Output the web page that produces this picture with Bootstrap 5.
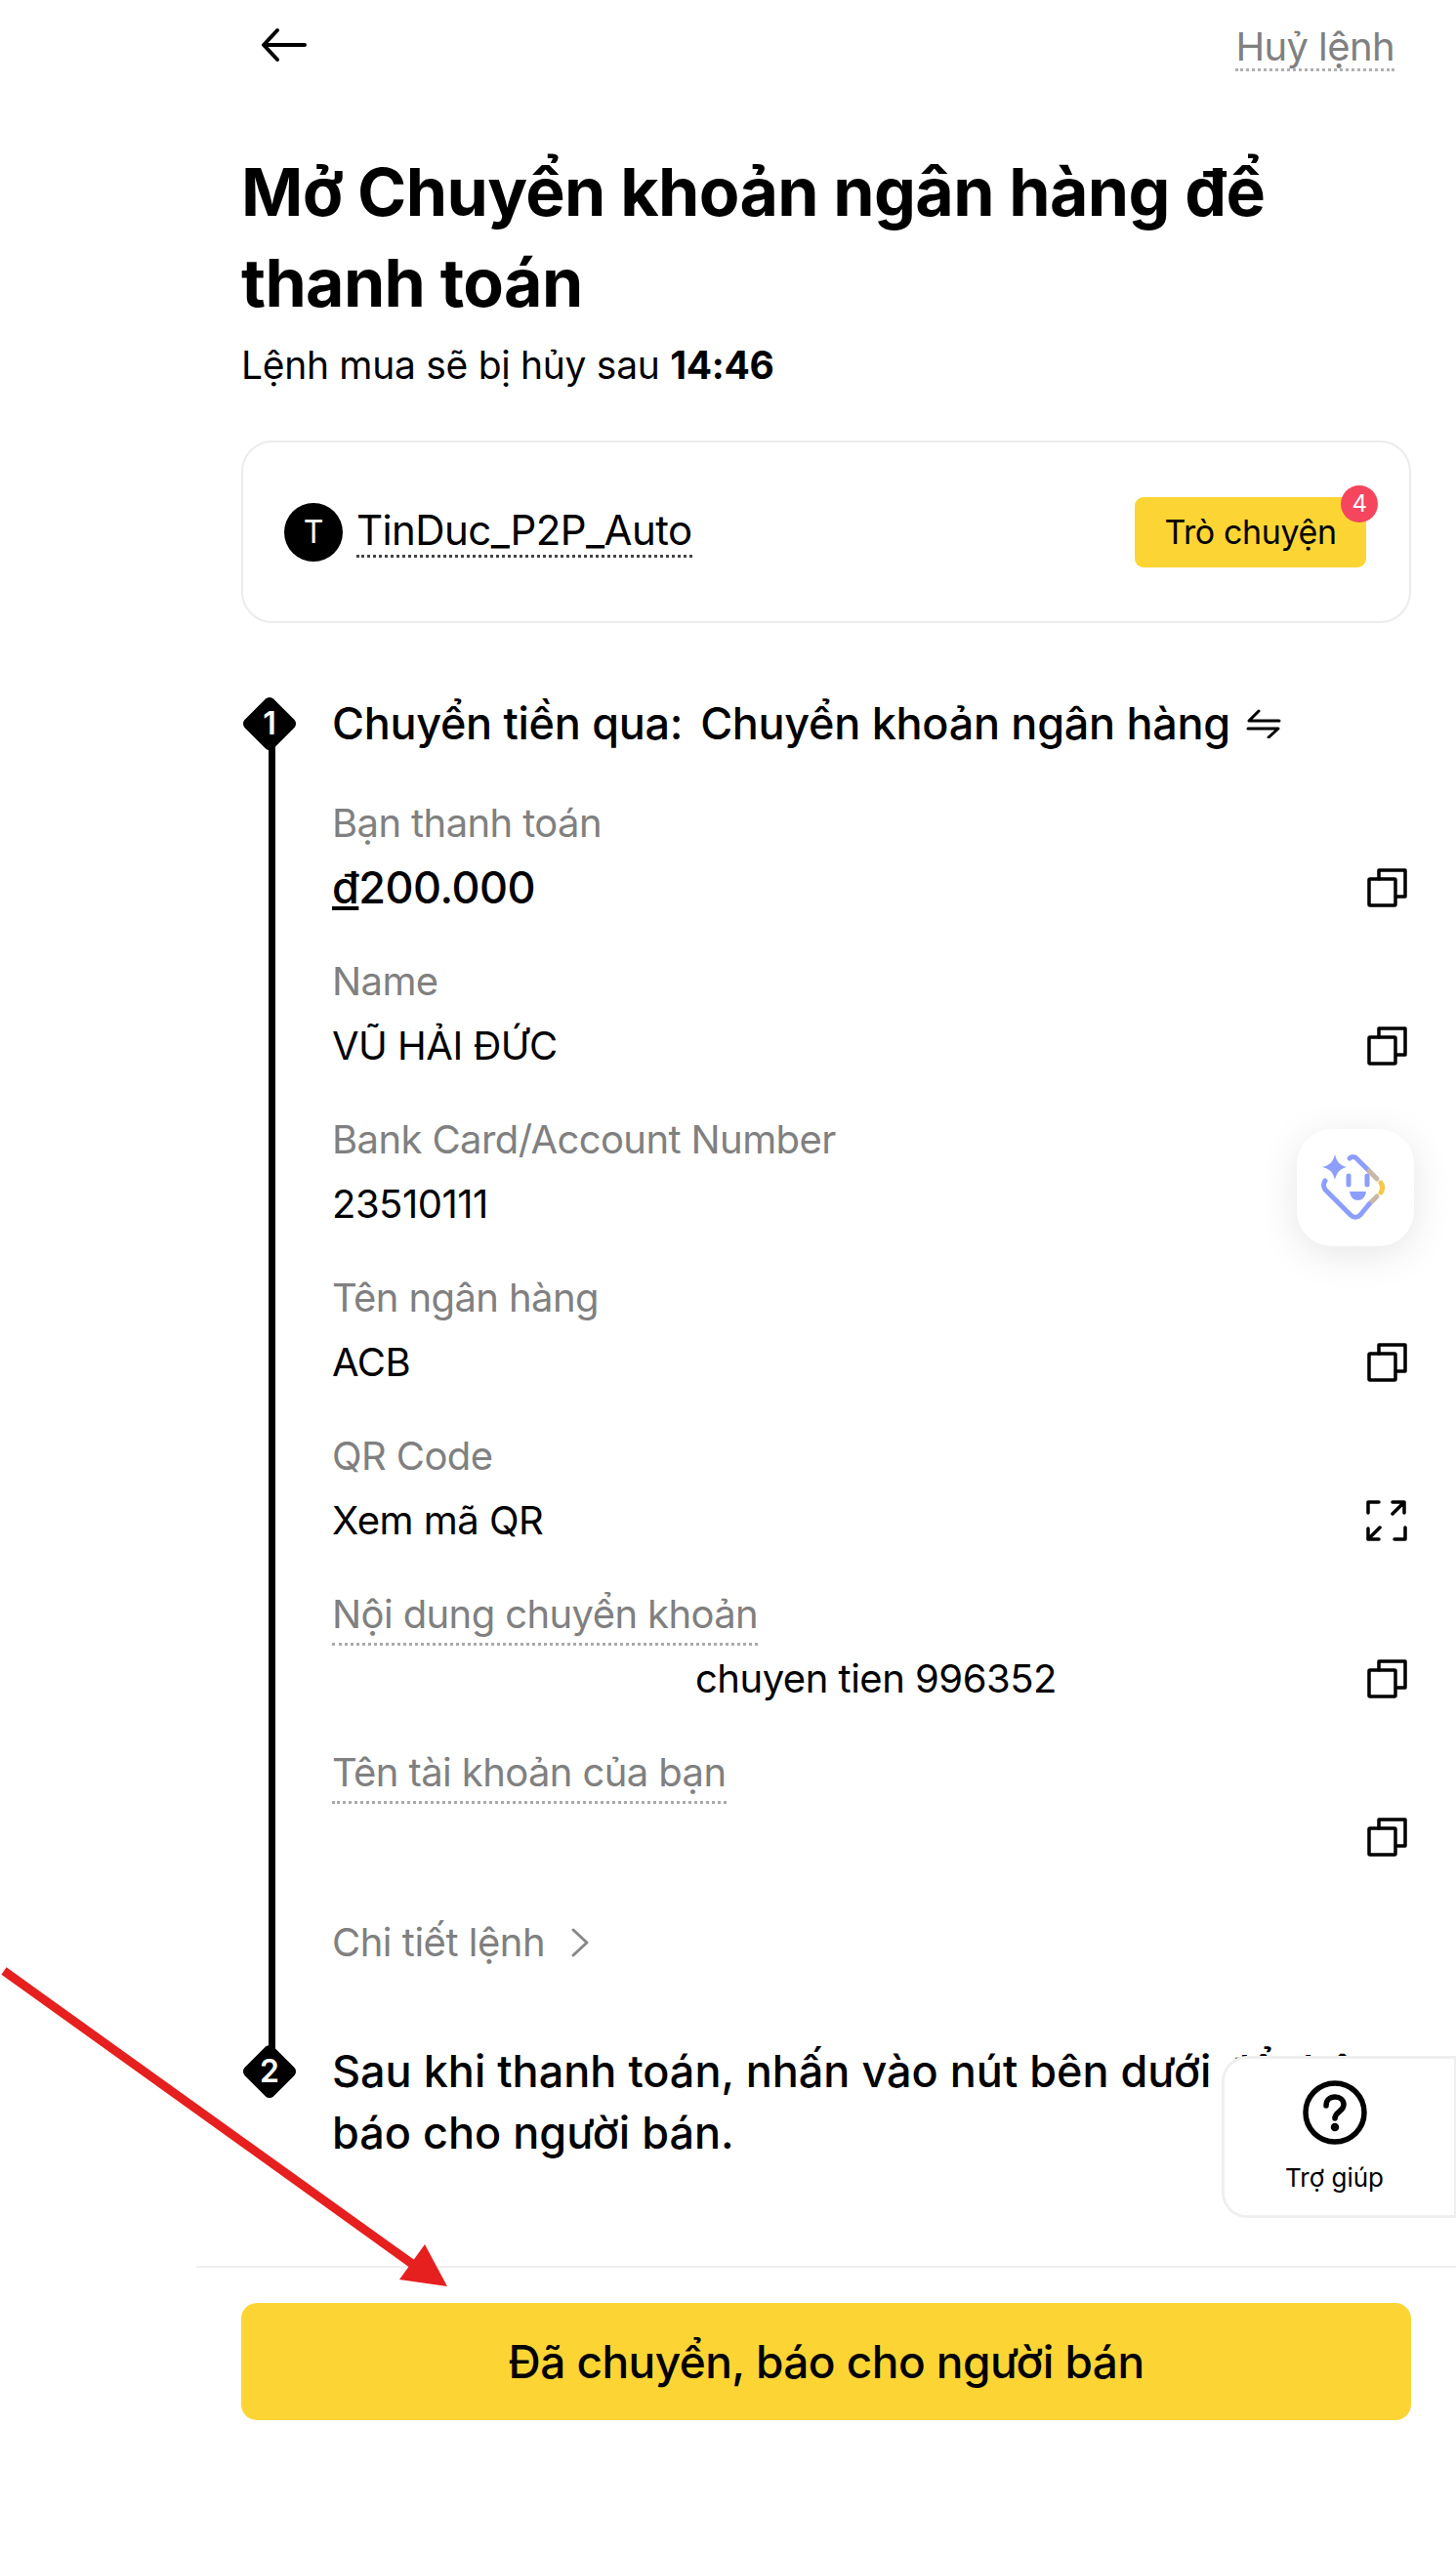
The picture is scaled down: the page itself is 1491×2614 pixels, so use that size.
<!doctype html>
<html lang="vi">
<head>
<title>Chuyển khoản ngân hàng</title>
<meta charset="utf-8">
<meta name="viewport" content="width=device-width, initial-scale=1">
<link href="https://cdn.jsdelivr.net/npm/bootstrap@5.3.3/dist/css/bootstrap.min.css" rel="stylesheet">
<style>
  body { font-family: Inter, "Noto Sans", sans-serif; color: #000; background: #fff; height: 2614px; position: relative; overflow: hidden; }
  .shell { margin-left: 201px; width: 1290px; }
  .shell-pad { padding: 0 46px; }
  .top-bar { height: 150px; padding-top: 23px; }
  .back-btn { margin-left: 20px; }
  .cancel-link { font-size: 40px; line-height: 50px; color: #808080; border-bottom: 3px dotted #b0b0b0; margin-right: 17px; letter-spacing: -.6px; height: 50px; }
  .page-title { font-size: 68px; font-weight: 700; line-height: 93px; margin: 0; letter-spacing: -.65px; }
  .count-line { font-size: 39px; line-height: 50px; margin: 13px 0 0; letter-spacing: -.3px; }
  .count-line b { font-weight: 700; }
  .seller-card { height: 187px; margin-top: 52px; border: 2px solid #ececec; border-radius: 32px; padding: 0 44px 0 42px; }
  .seller-avatar { width: 60px; height: 60px; font-size: 32px; background: #000; color: #fff; }
  .seller-name { font-size: 42px; line-height: 50px; margin-left: 14px; border-bottom: 3px dotted #444; letter-spacing: -.6px; }
  .chat-btn { width: 237px; height: 72px; background: #fcd535; border: 0; border-radius: 9px; font-size: 34px; color: #000; padding: 0; letter-spacing: -.4px; }
  .chat-count { width: 38px; height: 38px; top: 7px; left: 100%; font-size: 24px; background: #f6465d; color: #fff; transform: translate(-26px,-19px); }
  .step-list { margin-top: 72px; padding-left: 93px; }
  .step-line { left: 28px; top: 30px; width: 7px; height: 1380px; background: #000; }
  .step-mark { left: 0; top: 2px; width: 58px; height: 58px; }
  .step-mark span { position: absolute; inset: 0; display: flex; align-items: center; justify-content: center; color: #fff; font-size: 32px; font-weight: 600; }
  .step-head { font-size: 45px; line-height: 62px; font-weight: 500; letter-spacing: -.3px; margin: 0; }
  .via-method { margin-left: 18px; }
  .detail-gap { height: 41px; }
  .detail-row { height: 162px; }
  .detail-label { font-size: 40px; line-height: 60px; height: 62px; color: #808080; letter-spacing: -.6px; }
  .detail-label.dotted { border-bottom: 3px dotted #aaa; display: inline-block; }
  .detail-value { font-size: 40px; line-height: 68px; height: 68px; letter-spacing: -.5px; }
  .detail-value.amount { font-size: 45px; font-weight: 500; }
  .detail-value .indent { margin-left: 372px; }
  .copy-icon { margin-right: 4px; }
  .more-link { font-size: 40px; line-height: 60px; color: #808080; letter-spacing: -.5px; margin-top: 12px; }
  .step-two { margin-top: 70px; }
  .step-two .step-mark { left: -93px; top: 3px; }
  .step-two .step-head { line-height: 63px; letter-spacing: 0; }
  .foot-bar { position: absolute; top: 2320px; left: 201px; width: 1290px; border-top: 2px solid #efefef; padding: 36px 46px 0; }
  .pay-btn { width: 100%; height: 120px; background: #fcd535; border: 0; border-radius: 16px; font-size: 46px; font-weight: 500; color: #000; letter-spacing: -.55px; }
  .ai-float { position: absolute; left: 1328px; top: 1156px; width: 120px; height: 120px; background: #fff; border-radius: 36px; box-shadow: 0 8px 40px rgba(0,0,0,.1); }
  .help-float { position: absolute; left: 1251px; top: 2105px; width: 240px; height: 166px; background: #fff; border: 3px solid #efefef; border-right-width: 2px; border-radius: 26px 0 0 26px; padding: 22px 10px 0 0; }
  .help-float div { font-size: 26px; line-height: 34px; margin-top: 17px; }
  .red-arrow { position: absolute; left: 0; top: 2000px; }
</style>
</head>
<body>
<div class="shell">
  <div class="shell-pad">
    <div class="top-bar d-flex justify-content-between align-items-start">
      <svg class="back-btn mt-1" width="48" height="38" viewBox="0 0 48 38" fill="none" stroke="#000" stroke-width="4" stroke-linecap="round" stroke-linejoin="round"><path d="M45 19H4M17 4 3 19l14 15"/></svg>
      <div class="cancel-link">Huỷ lệnh</div>
    </div>

    <h1 class="page-title">Mở Chuyển khoản ngân hàng để thanh toán</h1>
    <p class="count-line">Lệnh mua sẽ bị hủy sau <b>14:46</b></p>

    <div class="card seller-card flex-row align-items-center justify-content-between">
      <div class="d-flex align-items-center">
        <div class="seller-avatar rounded-circle d-flex align-items-center justify-content-center">T</div>
        <div class="seller-name">TinDuc_P2P_Auto</div>
      </div>
      <button class="chat-btn position-relative">Trò chuyện<span class="chat-count position-absolute rounded-circle d-flex align-items-center justify-content-center">4</span></button>
    </div>

    <div class="step-list position-relative">
      <div class="step-line position-absolute"></div>
      <svg class="step-mark position-absolute" viewBox="0 0 58 58"><path d="M25 3.500a6 6 0 0 1 8 0L54.500 25a6 6 0 0 1 0 8L33 54.500a6 6 0 0 1-8 0L3.500 33a6 6 0 0 1 0-8z"/></svg>
      <div class="step-mark position-absolute"><span>1</span></div>

      <h2 class="step-head d-flex align-items-center"><span>Chuyển tiền qua:</span><span class="via-method">Chuyển khoản ngân hàng</span>
        <svg class="ms-3" width="36" height="30" viewBox="0 0 36 30" fill="none" stroke="#000" stroke-width="3" stroke-linecap="round" stroke-linejoin="round"><path d="M34 12H3L13 2M2 20h31L23 29"/></svg>
      </h2>

      <div class="detail-gap"></div>
      <div class="detail-row">
        <div class="detail-label">Bạn thanh toán</div>
        <div class="d-flex justify-content-between align-items-center detail-value amount"><span><u>đ</u>200.000</span>
          <svg class="copy-icon" width="42" height="42" viewBox="0 0 42 42" fill="none" stroke="#000" stroke-width="3.500" stroke-linecap="round" stroke-linejoin="round"><rect x="3" y="12" width="27" height="27" rx="1"/><path d="M13 12V3h27v27h-9"/></svg></div>
      </div>
      <div class="detail-row">
        <div class="detail-label">Name</div>
        <div class="d-flex justify-content-between align-items-center detail-value"><span>VŨ HẢI ĐỨC</span>
          <svg class="copy-icon" width="42" height="42" viewBox="0 0 42 42" fill="none" stroke="#000" stroke-width="3.500" stroke-linecap="round" stroke-linejoin="round"><rect x="3" y="12" width="27" height="27" rx="1"/><path d="M13 12V3h27v27h-9"/></svg></div>
      </div>
      <div class="detail-row">
        <div class="detail-label">Bank Card/Account Number</div>
        <div class="detail-value">23510111</div>
      </div>
      <div class="detail-row">
        <div class="detail-label">Tên ngân hàng</div>
        <div class="d-flex justify-content-between align-items-center detail-value"><span>ACB</span>
          <svg class="copy-icon" width="42" height="42" viewBox="0 0 42 42" fill="none" stroke="#000" stroke-width="3.500" stroke-linecap="round" stroke-linejoin="round"><rect x="3" y="12" width="27" height="27" rx="1"/><path d="M13 12V3h27v27h-9"/></svg></div>
      </div>
      <div class="detail-row">
        <div class="detail-label">QR Code</div>
        <div class="d-flex justify-content-between align-items-center detail-value"><span>Xem mã QR</span>
          <svg class="copy-icon" width="42" height="42" viewBox="0 0 42 42" fill="none" stroke="#000" stroke-width="3.500" stroke-linecap="round" stroke-linejoin="round"><path d="M2 13V2h11M27 2h12L27 14M39 2v11M2 40 14 28M2 40V29M2 40h11M29 40h11V28"/></svg></div>
      </div>
      <div class="detail-row">
        <div class="detail-label dotted">Nội dung chuyển khoản</div>
        <div class="d-flex justify-content-between align-items-center detail-value"><span class="indent">chuyen tien 996352</span>
          <svg class="copy-icon" width="42" height="42" viewBox="0 0 42 42" fill="none" stroke="#000" stroke-width="3.500" stroke-linecap="round" stroke-linejoin="round"><rect x="3" y="12" width="27" height="27" rx="1"/><path d="M13 12V3h27v27h-9"/></svg></div>
      </div>
      <div class="detail-row">
        <div class="detail-label dotted">Tên tài khoản của bạn</div>
        <div class="d-flex justify-content-end align-items-center detail-value">
          <svg class="copy-icon" width="42" height="42" viewBox="0 0 42 42" fill="none" stroke="#000" stroke-width="3.500" stroke-linecap="round" stroke-linejoin="round"><rect x="3" y="12" width="27" height="27" rx="1"/><path d="M13 12V3h27v27h-9"/></svg></div>
      </div>
      <div class="more-link d-flex align-items-center">Chi tiết lệnh
        <svg class="ms-4" width="22" height="32" viewBox="0 0 22 32" fill="none" stroke="#888" stroke-width="3" stroke-linecap="round" stroke-linejoin="round"><path d="M5 3l14 13L5 29"/></svg>
      </div>

      <div class="position-relative step-two">
        <svg class="step-mark position-absolute" viewBox="0 0 58 58"><path d="M25 3.500a6 6 0 0 1 8 0L54.500 25a6 6 0 0 1 0 8L33 54.500a6 6 0 0 1-8 0L3.500 33a6 6 0 0 1 0-8z"/></svg>
        <div class="step-mark position-absolute"><span>2</span></div>
        <h2 class="step-head">Sau khi thanh toán, nhấn vào nút bên dưới để thông báo cho người bán.</h2>
      </div>
    </div>
  </div>
</div>

<div class="foot-bar"><button class="pay-btn">Đã chuyển, báo cho người bán</button></div>

<div class="ai-float d-flex align-items-center justify-content-center">
  <svg width="72" height="72" viewBox="0 0 72 72" fill="none" stroke-width="5" stroke-linecap="round" stroke-linejoin="round">
    <path d="M30 6c2-2 5-2 7 0l13 13" stroke="#8c9eff"/>
    <path d="M50 19l8 8" stroke="#c9b7a8"/>
    <path d="M62 31c2 3 2 7 0 10" stroke="#f5c84b"/>
    <path d="M58 45l-8 8" stroke="#c9b7a8"/>
    <path d="M50 53 41 64c-3 3-7 3-10 0L5 38c-2-3-2-6 0-9" stroke="#8c9eff"/>
    <path d="M15 2c2 8 5 11 12 13-7 2-10 5-12 13-2-8-5-11-13-13 8-2 11-5 13-13z" fill="#8c9eff" stroke="none"/>
    <path d="M29 24v9M48 24v9" stroke="#8c9eff" stroke-width="5"/>
    <path d="M30 40h17c-1 6-4 9-8.500 9S31 46 30 40z" fill="#8c9eff" stroke="none"/>
  </svg>
</div>

<div class="help-float text-center">
  <svg width="66" height="66" viewBox="0 0 66 66" fill="none" stroke="#000" stroke-width="5.500" stroke-linecap="round" stroke-linejoin="round"><circle cx="33" cy="33" r="30"/><path d="M24 26c0-6 4-9 9-9s9 3 9 8c0 7-9 7-9 14"/><circle cx="33" cy="48" r="1.500" fill="#000"/></svg>
  <div>Trợ giúp</div>
</div>

<svg class="red-arrow" width="470" height="350" viewBox="0 0 470 350" fill="none">
  <path d="M4 18 425 320" stroke="#e61f1f" stroke-width="9"/>
  <path d="M458 341 435 298 409 334z" fill="#e61f1f"/>
</svg>

<script src="https://cdn.jsdelivr.net/npm/bootstrap@5.3.3/dist/js/bootstrap.bundle.min.js"></script>
</body>
</html>
